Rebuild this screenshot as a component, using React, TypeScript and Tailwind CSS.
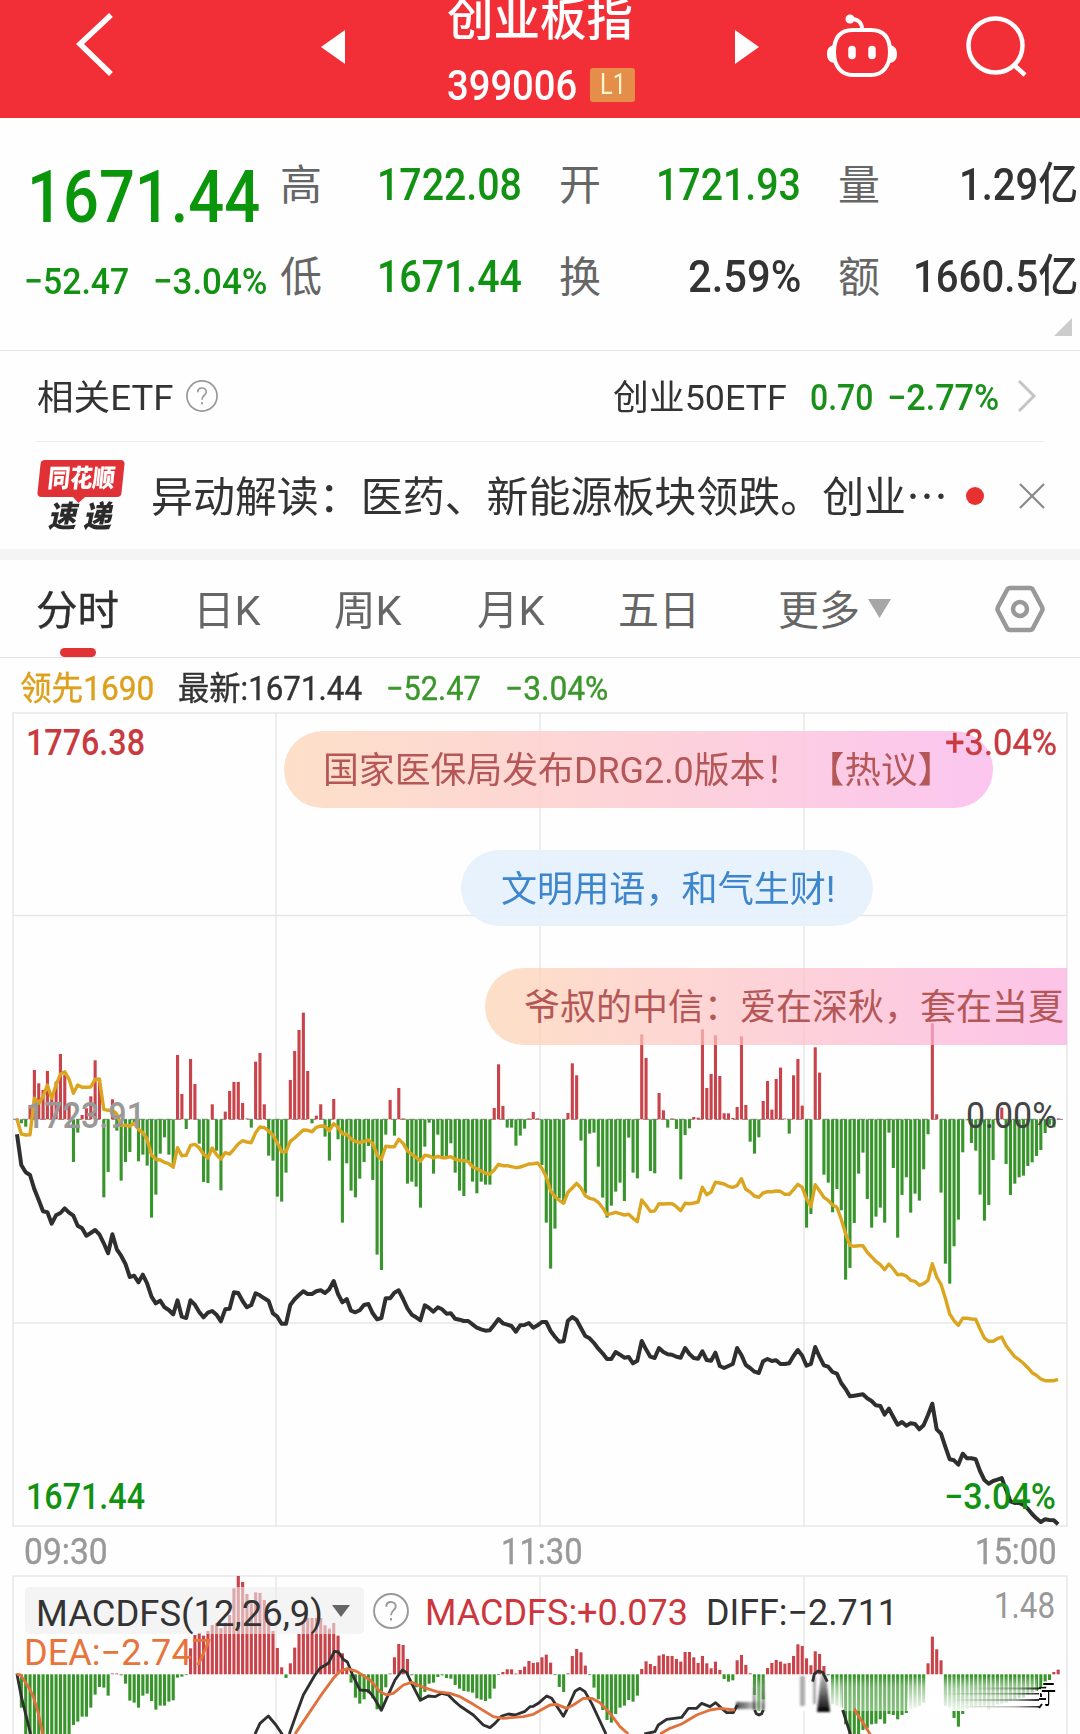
import { useLayoutEffect, useRef, useState, type ReactNode } from 'react';

// one value per trading minute step, three units per pixel
const STEP = 4.338;
const START = 17;

const volume = [
  0, -12, -22, 43, 148, 108, 88, 145, 73, 113, 196, 133, 48, -128, -40, 13, 33, 69, 177, 118,
  -234, -158, 60, -34, -184, -128, -98, -12, -126, -106, -139, -295, -226, -103, -54, -106, -142, 193, 76, -29,
  181, 106, -73, -188, -191, 45, -94, -213, 23, 85, 112, 112, 49, 0, -25, 173, 199, 45, -109, -124,
  -232, -247, -160, 118, 205, 268, 320, 145, -12, 11, 45, -52, -124, 61, -60, -310, -132, -214, -234, -178,
  -128, -80, -182, -406, -452, -46, 58, -49, 94, 1, -193, -187, -202, -265, -82, -10, -163, -46, -112, -114,
  -72, -160, -214, -230, -127, -187, -222, -187, -196, -196, 34, 165, 40, -25, -25, -79, -49, -28, 2, 22,
  0, -137, -310, -448, -328, -237, -247, 19, 168, 132, -64, -222, -43, -40, -142, -235, -295, -259, -217, -190,
  -245, -55, -160, -177, 255, 184, -155, -162, 79, 27, -25, 2, -29, -180, -47, -27, 7, 5, 270, 94,
  136, 252, 130, 18, 18, 4, 37, 249, 43, -67, -103, -54, 55, 115, 29, 121, 155, 1, -43, 132,
  181, 41, -325, -284, 216, 140, -166, -190, -279, -209, -273, -481, -446, -311, -163, -100, -239, -325, -292, -265,
  -310, -40, -146, -355, -227, -174, -280, -223, -244, -150, -45, 288, 15, -220, -433, -493, -381, -301, -99, -3,
  -71, -94, -226, -304, -257, -122, 0, 35, -134, -227, -193, -174, -169, -140, -129, -110, -92, -41, -16, -24, 0,
];

const price = [
  463, 555, 577, 585, 628, 660, 694, 697, 731, 706, 699, 685, 698, 707, 737, 745, 767, 759, 750, 763,
  790, 820, 763, 808, 827, 852, 891, 887, 907, 884, 910, 950, 970, 962, 982, 990, 1003, 961, 1010, 1014,
  961, 974, 996, 1012, 998, 993, 1004, 1024, 988, 986, 937, 939, 963, 982, 975, 940, 946, 955, 963, 1000,
  1010, 1031, 1031, 975, 958, 945, 934, 942, 942, 934, 931, 939, 928, 903, 942, 967, 957, 992, 997, 991,
  975, 972, 1000, 1018, 1014, 955, 955, 938, 931, 957, 985, 1004, 1012, 1021, 976, 984, 995, 982, 988, 1001,
  1000, 1016, 1019, 1023, 1023, 1033, 1043, 1048, 1052, 1051, 1034, 1017, 1030, 1034, 1038, 1055, 1036, 1035, 1029, 1043,
  1036, 1026, 1026, 1053, 1070, 1085, 1084, 1022, 1011, 1020, 1044, 1068, 1075, 1089, 1106, 1120, 1137, 1137, 1116, 1124,
  1133, 1131, 1150, 1142, 1083, 1108, 1130, 1134, 1104, 1116, 1123, 1124, 1130, 1133, 1104, 1122, 1134, 1136, 1114, 1140,
  1142, 1118, 1158, 1164, 1158, 1152, 1104, 1125, 1155, 1164, 1175, 1179, 1144, 1137, 1143, 1141, 1152, 1152, 1150, 1128,
  1110, 1127, 1157, 1152, 1101, 1130, 1156, 1160, 1176, 1181, 1209, 1227, 1249, 1247, 1245, 1243, 1255, 1263, 1276, 1278,
  1304, 1286, 1311, 1334, 1326, 1337, 1330, 1332, 1348, 1336, 1305, 1271, 1348, 1361, 1400, 1438, 1441, 1454, 1421, 1435,
  1435, 1438, 1473, 1500, 1511, 1503, 1499, 1494, 1529, 1564, 1569, 1568, 1575, 1586, 1602, 1615, 1626, 1618, 1620, 1621, 1633,
];

const lead = [
  418, 462, 465, 464, 355, 370, 350, 315, 355, 315, 283, 275, 298, 340, 315, 322, 322, 321, 298, 297,
  388, 391, 390, 402, 436, 436, 438, 430, 448, 458, 478, 525, 538, 540, 547, 551, 562, 503, 527, 526,
  496, 493, 503, 523, 534, 504, 524, 537, 518, 522, 508, 492, 482, 486, 488, 458, 441, 443, 453, 466,
  488, 515, 515, 484, 474, 462, 450, 451, 455, 442, 438, 439, 452, 431, 442, 461, 463, 477, 484, 488,
  484, 480, 490, 525, 538, 499, 500, 500, 478, 490, 512, 523, 532, 544, 526, 528, 534, 529, 533, 533,
  530, 538, 541, 542, 545, 560, 566, 573, 580, 582, 570, 553, 557, 557, 560, 563, 561, 557, 552, 551,
  549, 565, 590, 632, 650, 661, 670, 637, 624, 610, 624, 647, 655, 658, 667, 683, 704, 701, 697, 701,
  705, 703, 715, 725, 660, 676, 694, 693, 671, 672, 671, 671, 680, 692, 670, 671, 669, 666, 622, 644,
  636, 607, 609, 612, 619, 622, 617, 596, 628, 636, 648, 652, 639, 635, 635, 633, 634, 643, 643, 629,
  613, 622, 656, 680, 614, 632, 652, 661, 675, 682, 718, 761, 796, 799, 797, 797, 817, 830, 844, 854,
  869, 852, 867, 884, 883, 888, 901, 904, 916, 911, 901, 851, 891, 913, 954, 1002, 1022, 1036, 1015, 1015,
  1017, 1018, 1047, 1074, 1084, 1084, 1076, 1071, 1097, 1114, 1130, 1139, 1150, 1163, 1178, 1186, 1197, 1202, 1202, 1202, 1198,
];

const macd = [
  0, -100, -190, -190, -190, -190, -190, -190, -190, -190, -190, -190, -185, -152, -142, -127, -127, -100, -61, -38,
  -40, -64, 2, 2, -3, -28, -79, -85, -100, -64, -58, -80, -106, -94, -94, -82, -78, -10, -7, -2,
  78, 118, 124, 116, 130, 148, 153, 138, 155, 178, 258, 295, 277, 241, 213, 246, 244, 223, 168, 130,
  79, 21, -11, 33, 80, 121, 155, 169, 169, 169, 169, 147, 137, 154, 116, 63, 18, -25, -70, -88,
  -75, -57, -72, -105, -107, -39, 2, 51, 91, 88, 46, -3, -39, -75, -53, -28, -25, -8, -3, -11,
  -13, -32, -43, -50, -52, -55, -72, -76, -80, -73, -43, -1, 7, 15, 15, 2, 13, 23, 40, 34,
  36, 51, 59, 35, -2, -38, -53, 3, 55, 76, 66, 26, -2, -40, -75, -107, -137, -145, -119, -100,
  -94, -77, -82, -64, 16, 39, 31, 25, 56, 60, 55, 55, 46, 38, 67, 67, 51, 34, 55, 33,
  18, 38, 13, -14, -22, -18, 42, 58, 28, 3, -62, -110, -75, 19, 34, 43, 38, 32, 34, 55,
  90, 85, 48, 27, 69, 61, 25, -3, -90, -95, -100, -150, -190, -190, -190, -167, -162, -150, -148, -135,
  -148, -119, -122, -135, -122, -116, -105, -100, -95, -85, 33, 113, 75, 42, -95, -100, -131, -157, -119, -105,
  -100, -100, -98, -95, -108, -95, -90, -88, -85, -80, -75, -72, -70, -62, -55, -50, -45, -40, -17, 7, 14,
];

const diffLines = [
  '51,583 64,650 92,762',
  '765,762 780,730 805,708 828,735 848,765',
  '868,762 890,700 910,645 945,585 960,565 985,550 1003,514 1015,516 1030,538 1042,546 1060,590 1080,630 1105,632 1120,650 1144,691 1160,655 1185,600 1207,570 1220,578 1235,610 1261,661 1285,648 1305,650 1325,640 1345,645 1365,665 1380,678 1420,705 1450,735 1470,743 1485,730 1505,708 1525,702 1545,705 1575,694 1590,680 1600,679 1615,670 1640,648 1655,655 1690,709 1700,690 1725,634 1740,625 1755,635 1775,670 1818,762',
  '1933,762 1965,755 1975,735 2000,718 2045,712 2065,685 2090,685 2105,670 2130,680 2147,668 2165,685 2180,698 2200,698 2212,675',
  '2264,690 2269,701 2277,705 2285,701 2290,690',
  '2438,605 2443,582 2455,573 2468,577 2482,605',
  '2528,690 2552,765',
];

const deaLines = [
  '51,583 62,585 85,620 100,650 115,700 128,762',
  '885,762 920,710 960,650 1000,595 1020,573 1042,566 1070,574 1110,600 1140,635 1160,645 1180,640 1210,615 1235,607 1270,622 1310,635 1350,640 1380,650 1420,673 1480,710 1510,715 1570,710 1600,703 1650,675 1670,673 1700,685 1720,675 1750,655 1775,655 1800,668 1830,700 1860,740 1885,762',
  '1980,762 2010,745 2045,732 2090,705 2130,690 2160,685 2205,690',
  '2563,685 2570,700 2590,730 2612,765',
];

function toPoints(values: number[], top: number) {
  return values.map((v, i) => `${(START + i * STEP).toFixed(1)},${(top + v / 3).toFixed(1)}`).join(' ');
}

function Fit({ w, className = '', children }: { w: number; className?: string; children: ReactNode }) {
  const ref = useRef<HTMLSpanElement>(null);
  const [scale, setScale] = useState(1);

  useLayoutEffect(() => {
    if (ref.current) setScale(w / ref.current.offsetWidth);
  }, [w]);

  return (
    <span className={`block shrink-0 whitespace-nowrap leading-none ${className}`} style={{ width: w }}>
      <span ref={ref} className="inline-block origin-left" style={{ transform: `scaleX(${scale})` }}>
        {children}
      </span>
    </span>
  );
}

function Bars({ values, base }: { values: number[]; base: number }) {
  return (
    <g>
      {values.map((v, i) => {
        const h = Math.max(Math.abs(v) / 3, 0.8);
        return (
          <rect
            key={i}
            x={START + i * STEP - 1.5}
            y={v >= 0 ? base - h : base}
            width={3.1}
            height={h}
            fill={v >= 0 ? '#c9434a' : '#38952b'}
          />
        );
      })}
    </g>
  );
}

function Label({ x, y, w, fill, size = 36, weight = 500, children }: {
  x: number; y: number; w: number; fill: string; size?: number; weight?: number; children: string;
}) {
  return (
    <text x={x} y={y} textLength={w} lengthAdjust="spacingAndGlyphs" fontSize={size} fontWeight={weight} fill={fill}>
      {children}
    </text>
  );
}

function Header() {
  return (
    <header className="flex h-[118px] items-start bg-[#f22f37] text-white">
      <svg className="mt-3 ml-[74px] h-16 w-10" viewBox="0 0 40 64" fill="none" stroke="white" strokeWidth="5.5">
        <path d="M37 3 6 32l31 30" />
      </svg>
      <svg className="mt-[30px] ml-[207px] h-[34px] w-6" viewBox="0 0 24 34" fill="white">
        <path d="M24 0v34L0 17z" />
      </svg>
      <div className="ml-[102px] w-[188px]">
        <Fit w={186} className="-mt-[4px] text-[46px] font-medium">创业板指</Fit>
        <div className="mt-[20px] flex items-center gap-[13px]">
          <Fit w={130} className="pt-[3px] text-[42px] font-medium">399006</Fit>
          <span className="flex h-[34px] w-[45px] shrink-0 items-center justify-center rounded-[3px] bg-[#e58e49] text-[#fff6cf]">
            <Fit w={26} className="text-[29px]">L1</Fit>
          </span>
        </div>
      </div>
      <svg className="mt-[30px] ml-[100px] h-[34px] w-6" viewBox="0 0 24 34" fill="white">
        <path d="M0 0v34l24-17z" />
      </svg>
      <svg className="mt-3 ml-[67px] h-[68px] w-[72px]" viewBox="0 0 72 68" fill="none" stroke="white" strokeWidth="4">
        <circle cx="24" cy="7" r="4.5" fill="white" stroke="none" />
        <path d="M25 7c7 0 11 4 11 10" />
        <path d="M27 18h18c13 0 19 8 19 22s-7 23-19 23H27C15 63 8 54 8 40s6-22 19-22z" />
        <path d="M8 33c-5 1-7 4-7 9s2 8 7 9zM64 33c5 1 7 4 7 9s-2 8-7 9z" fill="white" stroke="none" />
        <path d="M26 37.500v6M46 37.500v6" strokeWidth="7.500" strokeLinecap="round" />
      </svg>
      <svg className="mt-3 ml-[64px] h-[68px] w-[68px]" viewBox="0 0 68 68" fill="none" stroke="white" strokeWidth="4.500">
        <circle cx="33.500" cy="33.500" r="27" />
        <path d="m52 53 11 10" />
      </svg>
    </header>
  );
}

function Stat({ label, value, w, last, green }: { label: string; value: string; w: number; last?: boolean; green?: boolean }) {
  return (
    <div className={`flex h-11 items-center justify-between ${last ? 'w-[242px] pr-[2px]' : 'w-[279px] pr-[37px]'}`}>
      <Fit w={42} className="pt-[3px] text-[42px] text-[#666]">{label}</Fit>
      <Fit w={w} className={`text-[45px] font-medium ${green ? 'text-[#129212]' : 'text-[#333]'}`}>{value}</Fit>
    </div>
  );
}

function Quote() {
  return (
    <section className="flex h-[233px] overflow-hidden border-b border-[#e6e6e6]">
      <div className="w-[280px] shrink-0 pt-[43px]">
        <Fit w={233} className="ml-[27px] text-[73px] font-medium text-[#0a960a]">1671.44</Fit>
        <div className="mt-[27px] flex h-10 items-center pl-[24px] text-[37px] font-medium text-[#129212]">
          <Fit w={105}>−52.47</Fit>
          <Fit w={114} className="ml-6">−3.04%</Fit>
        </div>
      </div>
      <div className="w-[800px] pt-[44px]">
        <div className="flex">
          <Stat label="高" value="1722.08" w={145} green />
          <Stat label="开" value="1721.93" w={145} green />
          <Stat label="量" value="1.29亿" w={119} last />
        </div>
        <div className="mt-[48px] flex">
          <Stat label="低" value="1671.44" w={145} green />
          <Stat label="换" value="2.59%" w={113} />
          <Stat label="额" value="1660.5亿" w={165} last />
        </div>
        <svg className="mt-5 mr-2 ml-auto h-[18px] w-[18px]" viewBox="0 0 18 18" fill="#ccc">
          <path d="M18 0v18H0z" />
        </svg>
      </div>
    </section>
  );
}

function HelpIcon({ size }: { size: number }) {
  return (
    <svg width={size} height={size} viewBox="0 0 34 34" fill="none" stroke="#999" strokeWidth="1.800" className="shrink-0">
      <circle cx="17" cy="17" r="16" />
      <path d="M12.500 13c0-3 2-4.500 4.500-4.500s4.500 1.800 4.500 4.200c0 3.300-4.500 3.800-4.500 8.300M17 23.500v2.500" />
    </svg>
  );
}

function Related() {
  return (
    <section className="mx-9 flex h-[91px] items-center border-b border-[#ececec] text-[#333]">
      <Fit w={136} className="ml-px pt-[4px] text-[35px]">相关ETF</Fit>
      <div className="ml-[13px]"><HelpIcon size={32} /></div>
      <Fit w={174} className="ml-auto pt-[4px] text-[35px]">创业50ETF</Fit>
      <Fit w={63} className="ml-[23px] pt-[3px] text-[36px] font-medium text-[#1a8f1a]">0.70</Fit>
      <Fit w={112} className="ml-[14px] pt-[3px] text-[36px] font-medium text-[#1a8f1a]">−2.77%</Fit>
      <svg className="mr-[7px] ml-[18px] h-9 w-5" viewBox="0 0 20 36" fill="none" stroke="#c4c4c4" strokeWidth="3">
        <path d="m2 3 15 15L2 33" />
      </svg>
    </section>
  );
}

function News() {
  return (
    <section className="flex h-[107px] items-center pl-[36px]">
      <div className="flex w-[90px] flex-col items-center">
        <div className="relative flex h-[37px] w-[84px] -skew-x-6 items-center justify-center rounded-[4px] bg-[#e03236]">
          <Fit w={67} className="text-[25px] font-black text-white">同花顺</Fit>
          <span className="absolute -bottom-[4px] left-[37px] size-[10px] rotate-45 bg-[#e03236]" />
        </div>
        <Fit w={63} className="mt-[5px] -skew-x-12 text-[30px] font-black text-[#2b2b2b]">速 递</Fit>
      </div>
      <Fit w={797} className="ml-[25px] pt-[4px] text-[42px] text-[#333]">异动解读：医药、新能源板块领跌。创业⋯</Fit>
      <span className="ml-[18px] size-[18px] rounded-full bg-[#e93030]" />
      <svg className="ml-[35px] size-[26px]" viewBox="0 0 26 26" stroke="#888" strokeWidth="2.200">
        <path d="m1 1 24 24M25 1 1 25" />
      </svg>
    </section>
  );
}

function Tabs() {
  return (
    <nav className="flex h-[98px] items-center border-b border-[#e2e2e2] pl-[36px] text-[41px] text-[#666]">
      <div className="relative">
        <Fit w={83} className="pt-[6px] text-[#2f2f2f] [-webkit-text-stroke:0.4px]">分时</Fit>
        <span className="absolute -bottom-[25px] left-[24px] h-[9px] w-[36px] rounded-full bg-[#e13336]" />
      </div>
      <Fit w={68} className="ml-[74px] pt-[6px]">日K</Fit>
      <Fit w={68} className="ml-[73px] pt-[6px]">周K</Fit>
      <Fit w={68} className="ml-[75px] pt-[6px]">月K</Fit>
      <Fit w={82} className="ml-[73px] pt-[6px]">五日</Fit>
      <Fit w={82} className="ml-[78px] pt-[6px]">更多</Fit>
      <svg className="ml-[8px] h-[19px] w-[23px]" viewBox="0 0 23 19" fill="#a6a6a6">
        <path d="M0 0h23L11.500 19z" />
      </svg>
      <svg className="ml-[104px] h-[48px] w-[50px]" viewBox="0 0 50 48" fill="none" stroke="#999" strokeWidth="4.500" strokeLinejoin="round">
        <path d="M15 3h20q2 0 3 2l9 17q1 2 0 4l-9 17q-1 2-3 2H15q-2 0-3-2L3 26q-1-2 0-4l9-17q1-2 3-2z" />
        <circle cx="25" cy="24" r="7" />
      </svg>
    </nav>
  );
}

function Legend() {
  return (
    <div className="flex h-[54px] items-center pt-[7px] pl-[20px] text-[33px]">
      <Fit w={134} className="text-[#dda01c] [-webkit-text-stroke:0.4px]">领先1690</Fit>
      <Fit w={184} className="ml-[24px] text-[#333] [-webkit-text-stroke:0.4px]">最新:1671.44</Fit>
      <Fit w={95} className="ml-[24px] text-[#3b962b] [-webkit-text-stroke:0.4px]">−52.47</Fit>
      <Fit w={103} className="ml-[24px] text-[#3b962b] [-webkit-text-stroke:0.4px]">−3.04%</Fit>
    </div>
  );
}

function PriceChart() {
  return (
    <div className="relative h-[816px]">
      <svg className="block h-[816px] w-[1080px]" viewBox="0 712 1080 816">
        <g stroke="#e7e7e7" strokeWidth="1.500" fill="none">
          <path d="M13 713h1054v813H13zM276 713v813M540 713v813M804 713v813M13 915.500h1054M13 1323h1054" />
        </g>
        <path d="M13 1119.300h1050" stroke="#999" strokeWidth="1.200" strokeDasharray="6 3" />
        <Bars values={volume} base={1119.3} />
        <polyline points={toPoints(lead, 980)} fill="none" stroke="#dba51f" strokeWidth="3.400" strokeLinejoin="round" />
        <polyline points={toPoints(price, 980)} fill="none" stroke="#2f2f2f" strokeWidth="4" strokeLinejoin="round" />
        <Label x={26} y={755} w={119} fill="#c93a3e">1776.38</Label>
        <Label x={26} y={1128} w={119} fill="#999" weight={500}>1723.91</Label>
        <Label x={26} y={1509} w={119} fill="#129212">1671.44</Label>
        <Label x={966} y={1128} w={91} fill="#444" weight={400}>0.00%</Label>
        <Label x={944} y={1509} w={112} fill="#129212">−3.04%</Label>
      </svg>
      <div className="absolute top-[19px] left-[284px] flex h-[77px] w-[709px] items-center rounded-full bg-linear-to-r from-[#fddcc3]/90 via-[#fdced4]/90 to-[#fbbfee]/90 pt-[3px] pl-[39px] text-[36px] text-[#b55757]">
        <Fit w={478}>国家医保局发布DRG2.0版本！</Fit>
        <Fit w={146} className="ml-[7px]">【热议】</Fit>
      </div>
      <div className="absolute top-[138px] left-[461px] flex h-[76px] w-[412px] items-center rounded-full bg-[#e6f1fc]/90 pt-[3px] pl-[40px] text-[36px] text-[#3d85cc]">
        <Fit w={334}>文明用语，和气生财!</Fit>
      </div>
      <div className="absolute top-[256px] left-[485px] flex h-[77px] w-[582px] items-center rounded-l-full bg-linear-to-r from-[#fdd5b5]/75 via-[#fdbfc8]/70 to-[#fbb0e0]/75 pt-[3px] pl-[39px] text-[36px] text-[#b55757]">
        <Fit w={540}>爷叔的中信：爱在深秋，套在当夏</Fit>
      </div>
      <Fit w={112} className="absolute top-[13px] left-[945px] text-[36px] text-[#c93a3e] [-webkit-text-stroke:0.4px]">+3.04%</Fit>
    </div>
  );
}

function TimeAxis() {
  return (
    <div className="flex h-[47px] items-center justify-between pr-[23px] pl-[24px] text-[36px] text-[#999] [-webkit-text-stroke:0.4px]">
      <Fit w={84}>09:30</Fit>
      <Fit w={82}>11:30</Fit>
      <Fit w={82}>15:00</Fit>
    </div>
  );
}

function MacdChart() {
  return (
    <div className="relative h-[159px] overflow-hidden">
      <svg className="block h-[159px] w-[1080px]" viewBox="0 1575 1080 159">
        <defs>
          <linearGradient id="haze" x1="0" y1="0" x2="0" y2="1">
            <stop offset="0" stopColor="#fff" stopOpacity="0" />
            <stop offset="0.3" stopColor="#fff" stopOpacity="0.3" />
            <stop offset="1" stopColor="#fff" stopOpacity="0.4" />
          </linearGradient>
          <linearGradient id="fade" x1="0" y1="0" x2="0" y2="1">
            <stop offset="0" stopColor="#fff" stopOpacity="0" />
            <stop offset="1" stopColor="#fff" stopOpacity="0.9" />
          </linearGradient>
          <linearGradient id="ink" x1="0" y1="0" x2="0" y2="1">
            <stop offset="0" stopColor="#333" stopOpacity="0.3" />
            <stop offset="1" stopColor="#000" stopOpacity="1" />
          </linearGradient>
          <linearGradient id="streak" x1="0" y1="0" x2="1" y2="0">
            <stop offset="0" stopColor="#222" stopOpacity="0" />
            <stop offset="0.7" stopColor="#222" stopOpacity="0.35" />
            <stop offset="1" stopColor="#111" stopOpacity="0.9" />
          </linearGradient>
          <linearGradient id="trail" x1="0" y1="0" x2="1" y2="0">
            <stop offset="0" stopColor="#222" stopOpacity="0.8" />
            <stop offset="1" stopColor="#222" stopOpacity="0" />
          </linearGradient>
          <filter id="soft" x="-50%" y="-50%" width="200%" height="200%">
            <feGaussianBlur stdDeviation="1.200" />
          </filter>
        </defs>
        <path d="M13 1740V1576h1054v164M276 1576v160M540 1576v160M804 1576v98M804 1711v25" fill="none" stroke="#e7e7e7" strokeWidth="1.500" />
        <Bars values={macd} base={1674.3} />
        <rect x="735" y="1676" width="302" height="35" fill="url(#haze)" />
        <rect x="830" y="1676" width="12" height="35" fill="url(#fade)" />
        <rect x="907" y="1676" width="130" height="35" fill="url(#fade)" />
        <g filter="url(#soft)">
          <rect x="736" y="1702" width="28" height="7" fill="url(#trail)" />
          <rect x="753" y="1680" width="2.500" height="30" fill="url(#ink)" opacity=".7" />
          <rect x="762" y="1680" width="2.500" height="30" fill="url(#ink)" opacity=".7" />
          <rect x="800" y="1676" width="5" height="30" fill="#333" opacity=".4" />
          <rect x="813" y="1676" width="3" height="28" fill="#333" opacity=".4" />
          <path d="M821 1674h5l4 38h-13z" fill="url(#ink)" />
        </g>
        <g fill="url(#streak)">
          <rect x="970" y="1687.500" width="69" height="2" />
          <rect x="940" y="1693" width="99" height="1.500" />
          <rect x="950" y="1699" width="89" height="2" />
          <rect x="960" y="1706" width="79" height="1.500" />
        </g>
        <g transform="translate(0 1480) scale(.33333)" fill="none" strokeLinejoin="round" strokeWidth="8.500">
          {diffLines.map((p) => <polyline key={p} points={p} stroke="#2f2f2f" />)}
          {deaLines.map((p) => <polyline key={p} points={p} stroke="#e0713c" />)}
        </g>
        <path d="M1039 1688h7M1041 1693v4M1039 1699h7M1042 1704l-3 4" fill="none" stroke="#111" strokeWidth="2" />
        <rect x="25" y="1587" width="339" height="47" rx="5" fill="#ededed" fillOpacity=".6" />
        <Label x={36} y={1626} w={287} fill="#333" size={37} weight={400}>MACDFS(12,26,9)</Label>
        <path d="M332 1605h18l-9 12z" fill="#666" />
        <Label x={425} y={1625} w={263} fill="#cc363c" weight={400}>MACDFS:+0.073</Label>
        <Label x={706} y={1625} w={192} fill="#333" weight={400}>DIFF:−2.711</Label>
        <Label x={994} y={1618} w={61} fill="#999" weight={400}>1.48</Label>
        <Label x={24} y={1665} w={188} fill="#e8743c" weight={400}>DEA:−2.747</Label>
      </svg>
      <div className="absolute top-[18px] left-[373px]"><HelpIcon size={36} /></div>
      <div className="absolute top-[107px] left-[1041px]">
        <Fit w={15} className="text-[27px] text-black [-webkit-text-stroke:3px_white] [paint-order:stroke_fill]">亍</Fit>
      </div>
    </div>
  );
}

export default function App() {
  return (
    <div className="h-[1734px] w-[1080px] overflow-hidden bg-[#fefefe] font-[Roboto,'Noto_Sans_CJK_SC',sans-serif]">
      <Header />
      <Quote />
      <Related />
      <News />
      <div className="h-[11px] bg-[#f4f4f4]" />
      <Tabs />
      <Legend />
      <PriceChart />
      <TimeAxis />
      <MacdChart />
    </div>
  );
}
